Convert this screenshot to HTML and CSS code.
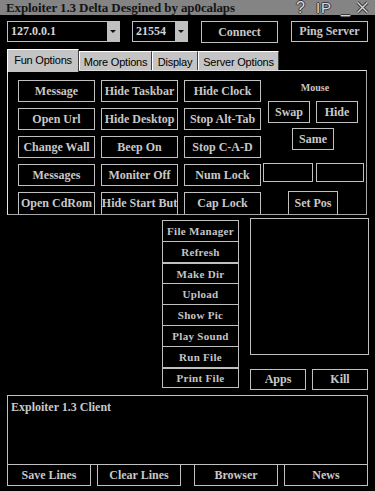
FILE: index.html
```html
<!DOCTYPE html>
<html>
<head>
<meta charset="utf-8">
<link rel="stylesheet" href="styles.css">
</head>
<body>
<div class="app">
  <div class="titlebar">
    <span class="title">Exploiter 1.3 Delta Desgined by ap0calaps</span>
    <span class="ticons">
      <span class="ti ti-q">?</span>
      <span class="ti ti-ip">IP</span>
      <span class="ti ti-min">_</span>
      <svg class="ti-x" width="13" height="13" viewBox="0 0 13 13"><path d="M1.5 1.5 L11.5 11.5 M11.5 1.5 L1.5 11.5" stroke="#3a3a3a" stroke-width="3.2"/><path d="M1.5 1.5 L11.5 11.5 M11.5 1.5 L1.5 11.5" stroke="#d6d6d6" stroke-width="1.4"/></svg>
    </span>
  </div>

  <div class="toolbar">
    <div class="combo combo-ip"><span class="combo-text">127.0.0.1</span><span class="combo-arrow"><i class="tri"></i></span></div>
    <div class="combo combo-port"><span class="combo-text">21554</span><span class="combo-arrow"><i class="tri"></i></span></div>
    <div class="btn btn-connect">Connect</div>
    <div class="btn btn-ping">Ping Server</div>
  </div>

  <div class="tabs">
    <div class="tab active">Fun Options</div>
    <div class="tab t-more">More Options</div>
    <div class="tab t-disp">Display</div>
    <div class="tab t-serv">Server Options</div>
  </div>

  <div class="panel">
    <div class="grid">
      <div class="btn">Message</div>
      <div class="btn">Hide Taskbar</div>
      <div class="btn">Hide Clock</div>
      <div class="btn">Open Url</div>
      <div class="btn">Hide Desktop</div>
      <div class="btn">Stop Alt-Tab</div>
      <div class="btn">Change Wall</div>
      <div class="btn">Beep On</div>
      <div class="btn">Stop C-A-D</div>
      <div class="btn">Messages</div>
      <div class="btn">Moniter Off</div>
      <div class="btn">Num Lock</div>
      <div class="btn cut">Open CdRom</div>
      <div class="btn cut">Hide Start But</div>
      <div class="btn cut">Cap Lock</div>
    </div>
    <div class="mouse">
      <div class="mouse-label">Mouse</div>
      <div class="mrow mrow-1">
        <div class="btn mbtn">Swap</div>
        <div class="btn mbtn">Hide</div>
      </div>
      <div class="mrow mrow-2">
        <div class="btn mbtn">Same</div>
      </div>
      <div class="mrow mrow-3">
        <div class="field f1"></div>
        <div class="field f2"></div>
      </div>
      <div class="mrow mrow-4">
        <div class="btn setpos">Set Pos</div>
      </div>
    </div>
  </div>

  <div class="middle">
    <div class="filelist">
      <div class="fitem">File Manager</div>
      <div class="fitem">Refresh</div>
      <div class="fitem thick">Make Dir</div>
      <div class="fitem">Upload</div>
      <div class="fitem">Show Pic</div>
      <div class="fitem">Play Sound</div>
      <div class="fitem">Run File</div>
      <div class="fitem thick last">Print File</div>
    </div>
    <div class="rightcol">
      <div class="listbox"></div>
      <div class="appkill">
        <div class="btn ak">Apps</div>
        <div class="btn ak">Kill</div>
      </div>
    </div>
  </div>

  <div class="log">
    <div class="logtext">Exploiter 1.3 Client</div>
  </div>
  <div class="logbtns">
    <div class="btn lb">Save Lines</div>
    <div class="btn lb">Clear Lines</div>
    <div class="btn lb lb-gap">Browser</div>
    <div class="btn lb">News</div>
  </div>
</div>
</body>
</html>
```
FILE: styles.css
```css
html, body {
  margin: 0;
  padding: 0;
  background: #000;
}
.app {
  width: 375px;
  height: 491px;
  overflow: hidden;
  background: #000;
  color: #c8c8c8;
  font-family: "Liberation Serif", "Times New Roman", serif;
  font-weight: bold;
  font-size: 12px;
}
.titlebar {
  height: 15px;
  background: #848484;
  display: flex;
  align-items: center;
  padding-left: 6px;
}
.title {
  color: #141414;
  font-size: 13px;
  line-height: 15px;
  letter-spacing: -0.1px;
}
.ticons {
  margin-left: auto;
  display: flex;
  align-items: center;
  height: 15px;
  font-family: "Liberation Sans", Arial, sans-serif;
  font-weight: normal;
}
.ti {
  color: #d8d8d8;
  font-size: 16px;
  line-height: 15px;
  text-shadow: 1px 0 0 #3a3a3a, -1px 0 0 #3a3a3a, 0 1px 0 #3a3a3a, 0 -1px 0 #3a3a3a;
}
.ti-q { margin-right: 11px; font-size: 16px; }
.ti-ip { margin-right: 9px; font-size: 15px; letter-spacing: 1px; }
.ti-min { margin-right: 6px; font-size: 16px; }
.ti-x { margin-right: 6px; }

.toolbar {
  display: flex;
  align-items: flex-start;
  padding: 6px 0 0 7px;
  height: 22px;
}
.combo {
  display: flex;
  height: 21px;
  box-sizing: border-box;
  border: 1px solid #c0c0c0;
  background: #000;
}
.combo-ip { width: 113px; margin-right: 12px; }
.combo-port { width: 56px; margin-right: 13px; }
.combo-text {
  flex: 1;
  padding-left: 3px;
  line-height: 19px;
  font-size: 12px;
  color: #d4d4d4;
}
.combo-arrow {
  width: 12px;
  background: #c0c0c0;
  display: flex;
  align-items: center;
  justify-content: center;
}
.tri {
  width: 0;
  height: 0;
  border-left: 3px solid transparent;
  border-right: 3px solid transparent;
  border-top: 3px solid #111;
}
.btn {
  box-sizing: border-box;
  border: 1px solid #c0c0c0;
  display: flex;
  align-items: center;
  justify-content: center;
  white-space: nowrap;
  overflow: hidden;
  color: #c8c8c8;
  font-size: 12px;
}
.btn-connect { width: 77px; height: 22px; margin-right: 13px; }
.btn-ping { width: 77px; height: 21px; }

.tabs {
  display: flex;
  align-items: flex-end;
  margin-top: 6px;
  padding-left: 7px;
  height: 21px;
  position: relative;
  z-index: 2;
}
.tab {
  box-sizing: border-box;
  height: 19px;
  background: #c4c4c4;
  color: #000;
  font-family: "Liberation Sans", Arial, sans-serif;
  font-weight: normal;
  font-size: 11px;
  letter-spacing: -0.2px;
  border-top: 1px solid #fff;
  border-left: 1px solid #fff;
  border-right: 1px solid #404040;
  display: flex;
  align-items: center;
  justify-content: center;
  padding-top: 1px;
}
.tab.active {
  width: 72px;
  height: 23px;
  margin-bottom: -2px;
  padding-bottom: 3px;
}
.t-more { width: 73px; }
.t-disp { width: 46px; }
.t-serv { width: 81px; }

.panel {
  margin-left: 7px;
  width: 360px;
  height: 145px;
  box-sizing: border-box;
  border-top: 1px solid #e0e0e0;
  border-left: 1px solid #e8e8e8;
  border-right: 1px solid #a8a8a8;
  border-bottom: 1px solid #a8a8a8;
  display: flex;
  overflow: hidden;
  position: relative;
  z-index: 1;
}
.grid {
  display: grid;
  grid-template-columns: 77px 77px 77px;
  grid-auto-rows: 22px;
  column-gap: 6px;
  row-gap: 6px;
  padding: 9px 0 0 10px;
  align-content: start;
}
.btn.cut {
  height: 26px;
  align-items: flex-start;
  padding-top: 3px;
}
.mouse {
  width: 104px;
  margin-left: 1px;
  display: flex;
  flex-direction: column;
}
.mouse-label {
  text-align: center;
  font-size: 10px;
  margin-top: 10px;
  height: 14px;
  line-height: 14px;
  padding-left: 2px;
}
.mrow { display: flex; }
.mrow-1 { margin-top: 6px; padding-left: 6px; gap: 6px; }
.mrow-2 { margin-top: 5px; padding-left: 30px; }
.mrow-3 { margin-top: 13px; padding-left: 1px; gap: 3px; }
.mrow-4 { margin-top: 9px; padding-left: 26px; }
.mbtn { width: 42px; height: 22px; }
.field {
  height: 19px;
  box-sizing: border-box;
  border: 1px solid #c0c0c0;
}
.f1 { width: 50px; }
.f2 { width: 48px; }
.setpos { width: 50px; height: 28px; align-items: flex-start; padding-top: 4px; }

.middle {
  display: flex;
  height: 180px;
  padding-left: 162px;
}
.filelist {
  margin-top: 5px;
  width: 77px;
}
.fitem {
  box-sizing: border-box;
  height: 21px;
  border: 1px solid #c0c0c0;
  border-bottom: none;
  display: flex;
  align-items: center;
  justify-content: center;
  font-size: 11px;
  letter-spacing: 0.3px;
  color: #c4c4c4;
}
.fitem.thick { border-top-width: 2px; }
.fitem.last { border-bottom: 1px solid #c0c0c0; }
.rightcol {
  margin-left: 11px;
  margin-top: 3px;
  width: 119px;
}
.listbox {
  height: 137px;
  box-sizing: border-box;
  border: 1px solid #c0c0c0;
}
.appkill {
  display: flex;
  gap: 6px;
  margin-top: 14px;
}
.ak { width: 56px; height: 21px; }

.log {
  margin-left: 7px;
  width: 361px;
  height: 70px;
  box-sizing: border-box;
  border: 1px solid #c0c0c0;
}
.logtext {
  padding: 4px 0 0 3px;
  font-size: 12px;
  line-height: 14px;
}
.logbtns {
  display: flex;
  margin-left: 7px;
  margin-top: -1px;
  gap: 6px;
}
.lb { width: 84px; height: 22px; }
.lb-gap { margin-left: 7px; }
```
